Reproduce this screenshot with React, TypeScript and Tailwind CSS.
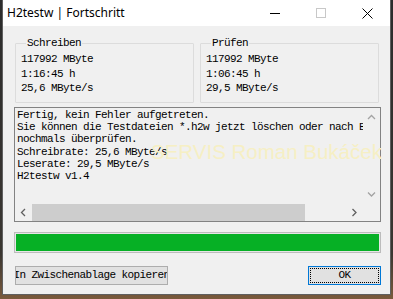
import React from "react";

const mono = { fontFamily: '"Liberation Mono", "DejaVu Sans Mono", monospace' };

function GroupBox({ title, lines }: { title: string; lines: string[] }) {
    return (
        <fieldset className="w-[179px] h-[66px] border border-[#dcdcdc] rounded-[1px] pl-[5px] pt-[3px]">
            <legend className="ml-[5px] px-[1px] text-[11px] leading-[12px] tracking-[-0.6px] text-black">{title}</legend>
            {lines.map((x, key) => (
                <div key={key} className="text-[11px] leading-[14.5px] tracking-[-0.6px] text-black whitespace-nowrap">{x}</div>
            ))}
        </fieldset>
    );
}

function Arrow({ dir }: { dir: "up" | "down" | "left" | "right" }) {
    const d = {
        up: "M1 5 L4.5 1.5 L8 5",
        down: "M1 1.5 L4.5 5 L8 1.5",
        left: "M5 1 L1.5 4.5 L5 8",
        right: "M1.5 1 L5 4.5 L1.5 8",
    }[dir];
    const vertical = dir === "up" || dir === "down";
    return (
        <svg width={vertical ? 9 : 7} height={vertical ? 7 : 9} viewBox={vertical ? "0 0 9 7" : "0 0 7 9"}>
            <path d={d} fill="none" stroke={vertical ? "#a3a3a3" : "#606060"} strokeWidth="1.3" />
        </svg>
    );
}

export default function App() {
    const output = [
        "Fertig, kein Fehler aufgetreten.",
        "Sie können die Testdateien *.h2w jetzt löschen oder nach Belieben",
        "nochmals überprüfen.",
        "Schreibrate: 25,6 MByte/s",
        "Leserate: 29,5 MByte/s",
        "H2testw v1.4",
    ];

    return (
        <div className="relative w-[393px] h-[299px] overflow-hidden bg-[linear-gradient(180deg,#2c2c2c_0%,#3a3631_85%,#7a5a3c_100%)]" style={mono}>
            <div className="ml-[2px] w-[389px] h-[295px] border-x border-b border-[#5f5f5f] bg-[#f0f0f0] flex flex-col">
                {/* title bar */}
                <div className="h-[26px] bg-white flex items-center justify-between shrink-0">
                    <span className="pl-[4px] text-[12px] text-black" style={{ fontFamily: '"Noto Sans", "Open Sans", sans-serif' }}>H2testw | Fortschritt</span>
                    <div className="flex h-full">
                        <div className="w-[46px] h-full flex items-center justify-center">
                            <div className="w-[10px] h-px bg-black" />
                        </div>
                        <div className="w-[46px] h-full flex items-center justify-center">
                            <div className="w-[10px] h-[10px] border border-[#c8c8c8]" />
                        </div>
                        <div className="w-[46px] h-full flex items-center justify-center">
                            <svg width="11" height="11" viewBox="0 0 11 11">
                                <path d="M0.5 0.5 L10.5 10.5 M10.5 0.5 L0.5 10.5" stroke="#000" strokeWidth="1" />
                            </svg>
                        </div>
                    </div>
                </div>

                <div className="flex flex-col pl-[11px] pr-[9px]">
                    <div className="flex gap-[6px] pl-[1px] mt-[11px]">
                        <GroupBox title="Schreiben" lines={["117992 MByte", "1:16:45 h", "25,6 MByte/s"]} />
                        <GroupBox title="Prüfen" lines={["117992 MByte", "1:06:45 h", "29,5 MByte/s"]} />
                    </div>

                    {/* output box */}
                    <div className="mt-[4px] h-[115px] border border-[#828282] grid grid-cols-[1fr_17px] grid-rows-[1fr_17px]">
                        <div className="overflow-hidden pl-[2px] pt-[1px] text-[11px] leading-[12.2px] tracking-[-0.6px] text-black">
                            {output.map((x, key) => (
                                <div key={key} className="whitespace-nowrap">{x}</div>
                            ))}
                        </div>
                        <div className="flex flex-col items-center justify-between py-[6px]">
                            <Arrow dir="up" />
                            <Arrow dir="down" />
                        </div>
                        <div className="flex items-center bg-[#f0f0f0]">
                            <div className="w-[17px] flex justify-center"><Arrow dir="left" /></div>
                            <div className="h-[17px] w-[273px] bg-[#cdcdcd]" />
                            <div className="flex-1" />
                            <div className="w-[17px] flex justify-center"><Arrow dir="right" /></div>
                        </div>
                        <div className="bg-[#f0f0f0]" />
                    </div>

                    {/* progress */}
                    <div className="mt-[10px] h-[21px] border border-[#bcbcbc] bg-[#e6e6e6] p-px">
                        <div className="h-full w-full bg-[#06b025]" />
                    </div>

                    <div className="mt-[13px] flex justify-between items-center pl-[1px]">
                        <div className="w-[153px] h-[19px] border border-[#adadad] bg-[#e1e1e1] flex items-center justify-center overflow-hidden">
                            <span className="whitespace-nowrap text-[11px] tracking-[-0.6px] text-black">In Zwischenablage kopieren</span>
                        </div>
                        <div className="w-[73px] h-[19px] border border-[#0078d7] bg-[#e1e1e1] p-[1px]">
                            <div className="h-full w-full border border-dotted border-black flex items-center justify-center">
                                <span className="text-[11px] tracking-[-0.6px] text-black">OK</span>
                            </div>
                        </div>
                    </div>
                </div>
            </div>

            {/* watermark over the screenshot */}
            <div className="absolute left-[151px] top-[140px] text-[20.5px] leading-[24px] text-[#f6efc4] whitespace-nowrap pointer-events-none" style={{ fontFamily: '"Liberation Sans", Arial, sans-serif' }}>
                SERVIS Roman Bukáček
            </div>
        </div>
    );
}
